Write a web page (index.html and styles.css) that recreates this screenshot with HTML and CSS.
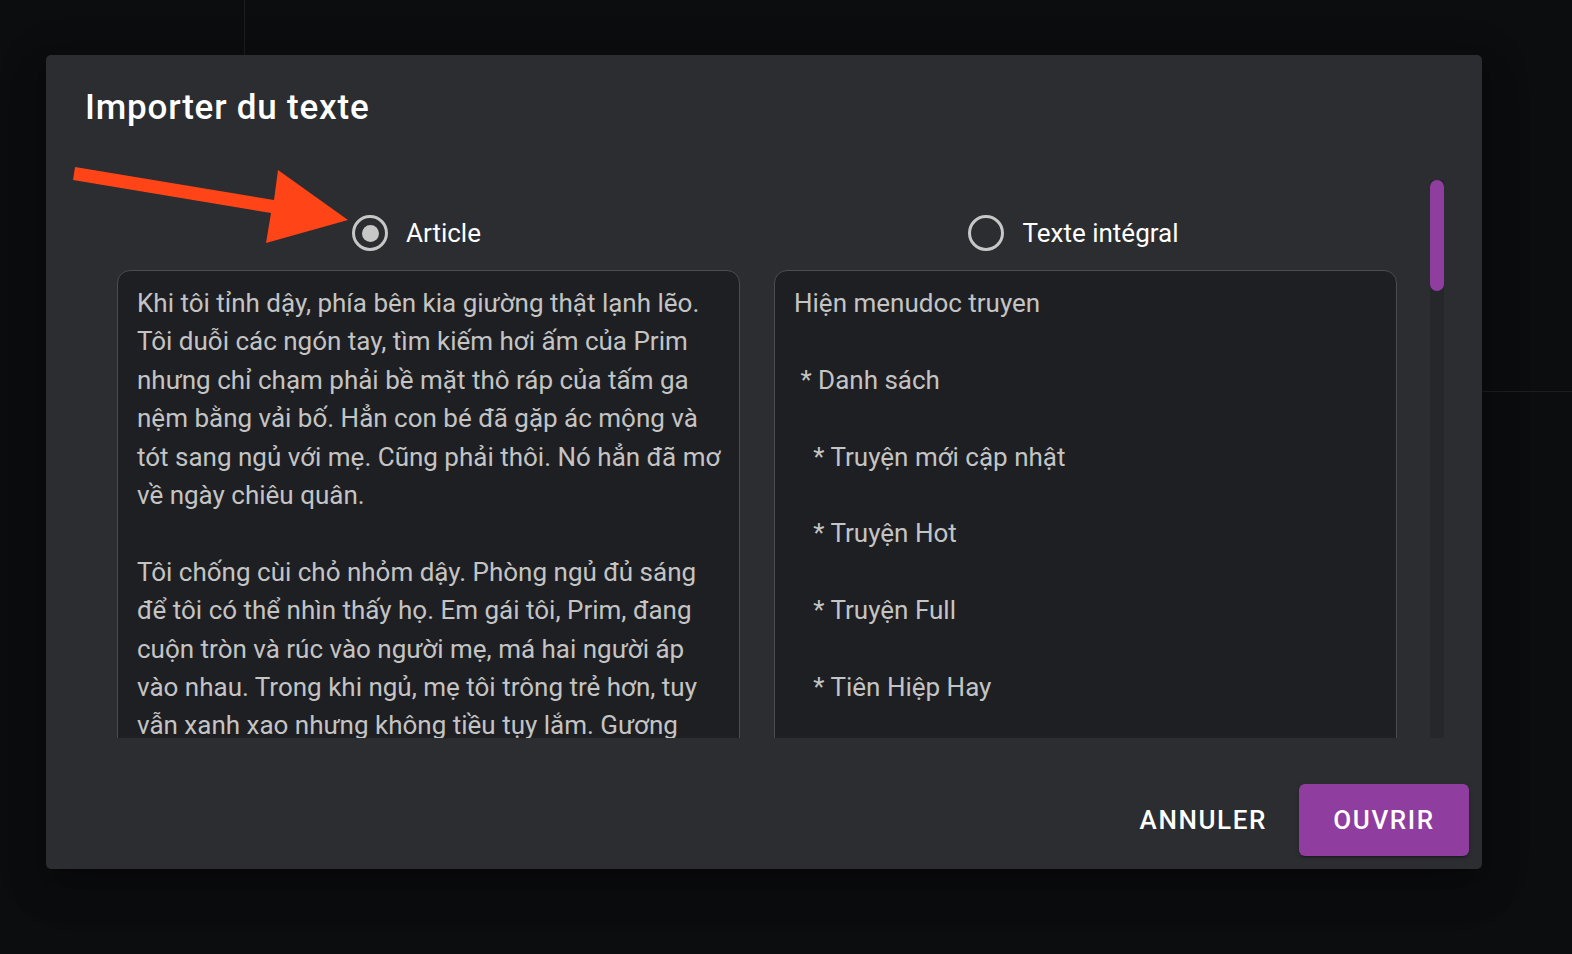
FILE: index.html
```html
<!DOCTYPE html>
<html lang="fr">
<head>
<meta charset="utf-8">
<title>Importer du texte</title>
<link rel="stylesheet" href="styles.css">
</head>
<body>
<div class="backdrop">
  <div class="bg-line-v"></div>
  <div class="bg-line-h"></div>
</div>
<div class="dialog">
  <h1 class="dialog-title">Importer du texte</h1>
  <div class="dialog-body">
    <div class="scroll-content">
      <div class="columns">
        <div class="column">
          <label class="radio-row">
            <span class="radio checked"><span class="dot"></span></span>
            <span class="radio-label">Article</span>
          </label>
          <div class="textbox"><div class="text">Khi tôi tỉnh dậy, phía bên kia giường thật lạnh lẽo.
Tôi duỗi các ngón tay, tìm kiếm hơi ấm của Prim
nhưng chỉ chạm phải bề mặt thô ráp của tấm ga
nệm bằng vải bố. Hẳn con bé đã gặp ác mộng và
tót sang ngủ với mẹ. Cũng phải thôi. Nó hẳn đã mơ
về ngày chiêu quân.

Tôi chống cùi chỏ nhỏm dậy. Phòng ngủ đủ sáng
để tôi có thể nhìn thấy họ. Em gái tôi, Prim, đang
cuộn tròn và rúc vào người mẹ, má hai người áp
vào nhau. Trong khi ngủ, mẹ tôi trông trẻ hơn, tuy
vẫn xanh xao nhưng không tiều tụy lắm. Gương</div></div>
        </div>
        <div class="column">
          <label class="radio-row">
            <span class="radio"></span>
            <span class="radio-label">Texte intégral</span>
          </label>
          <div class="textbox"><div class="text">Hiện menudoc truyen

 * Danh sách

   * Truyện mới cập nhật

   * Truyện Hot

   * Truyện Full

   * Tiên Hiệp Hay</div></div>
        </div>
      </div>
    </div>
    <div class="scrollbar"><div class="thumb"></div></div>
  </div>
  <div class="dialog-actions">
    <button class="btn btn-text">ANNULER</button>
    <button class="btn btn-primary">OUVRIR</button>
  </div>
</div>
<svg class="arrow" width="300" height="100" viewBox="60 160 300 100" aria-hidden="true">
  <polygon points="75,167 274,200 278,170 348,220 266,243 271,213 73,180" fill="#ff4417"/>
</svg>
</body>
</html>
```

FILE: styles.css
```css
* { box-sizing: border-box; }
html, body {
  margin: 0;
  padding: 0;
}
body {
  width: 1572px;
  height: 954px;
  background: #0c0d0f;
  font-family: Roboto, "Noto Sans", "Liberation Sans", sans-serif;
  position: relative;
  overflow: hidden;
  padding-top: 55px;
  padding-left: 46px;
}
.backdrop {
  position: absolute;
  inset: 0;
  z-index: 0;
}
.bg-line-v {
  position: absolute;
  left: 244px;
  top: 0;
  width: 1px;
  height: 55px;
  background: #1c1d20;
}
.bg-line-h {
  position: absolute;
  left: 1482px;
  top: 391px;
  width: 90px;
  height: 1px;
  background: #1c1d20;
}
.dialog {
  position: relative;
  z-index: 1;
  width: 1436px;
  height: 814px;
  background: #2b2d31;
  border-radius: 5px;
  box-shadow: 0 11px 15px -7px rgba(0,0,0,0.2), 0 24px 38px 3px rgba(0,0,0,0.14), 0 9px 46px 8px rgba(0,0,0,0.12);
  display: flex;
  flex-direction: column;
}
.dialog-title {
  margin: 0;
  padding: 31px 39px 0;
  height: 125px;
  font-size: 35px;
  line-height: 44px;
  font-weight: 500;
  color: #ffffff;
  letter-spacing: 0.8px;
}
.dialog-body {
  display: flex;
  padding-left: 39px;
  padding-right: 38px;
  height: 558px;
  overflow: hidden;
}
.scroll-content {
  flex: 1;
  overflow: hidden;
}
.columns {
  display: grid;
  grid-template-columns: 623px 623px;
  column-gap: 34px;
  padding: 0 33px 0 32px;
}
.column {
  display: flex;
  flex-direction: column;
}
.radio-row {
  display: flex;
  align-items: center;
  justify-content: center;
  gap: 18px;
  height: 90px;
  padding-right: 24px;
  padding-top: 16px;
}
.radio {
  width: 36px;
  height: 36px;
  border: 3px solid #c7c7c7;
  border-radius: 50%;
  display: flex;
  align-items: center;
  justify-content: center;
}
.radio .dot {
  width: 17px;
  height: 17px;
  border-radius: 50%;
  background: #c7c7c7;
}
.radio-label {
  font-size: 26px;
  color: #ffffff;
}
.textbox {
  background: #1e1f22;
  border: 1px solid #4a4c50;
  border-radius: 13px;
  padding: 13px 19px;
  height: 620px;
}
.text {
  white-space: pre;
  font-size: 26px;
  line-height: 38.4px;
  color: #c4c4c4;
}
.scrollbar {
  width: 14px;
  background: #25272b;
  height: 558px;
  flex: none;
}
.scrollbar .thumb {
  height: 111px;
  background: #8f3d9f;
  border-radius: 7px;
}
.dialog-actions {
  flex: 1;
  display: flex;
  justify-content: flex-end;
  align-items: flex-end;
  gap: 16px;
  padding: 0 13px 13px 0;
}
.btn {
  font-family: Roboto, "Noto Sans", "Liberation Sans", sans-serif;
  font-size: 26px;
  font-weight: 500;
  letter-spacing: 1.6px;
  border: none;
  cursor: pointer;
  height: 72px;
  border-radius: 6px;
}
.btn-text {
  background: transparent;
  color: #ffffff;
  padding: 0 16px;
}
.btn-primary {
  background: #8f3d9f;
  color: #ffffff;
  width: 170px;
  box-shadow: 0 3px 1px -2px rgba(0,0,0,0.2), 0 2px 2px 0 rgba(0,0,0,0.14), 0 1px 5px 0 rgba(0,0,0,0.12);
}
.arrow {
  position: absolute;
  left: 60px;
  top: 160px;
  z-index: 2;
}
```
